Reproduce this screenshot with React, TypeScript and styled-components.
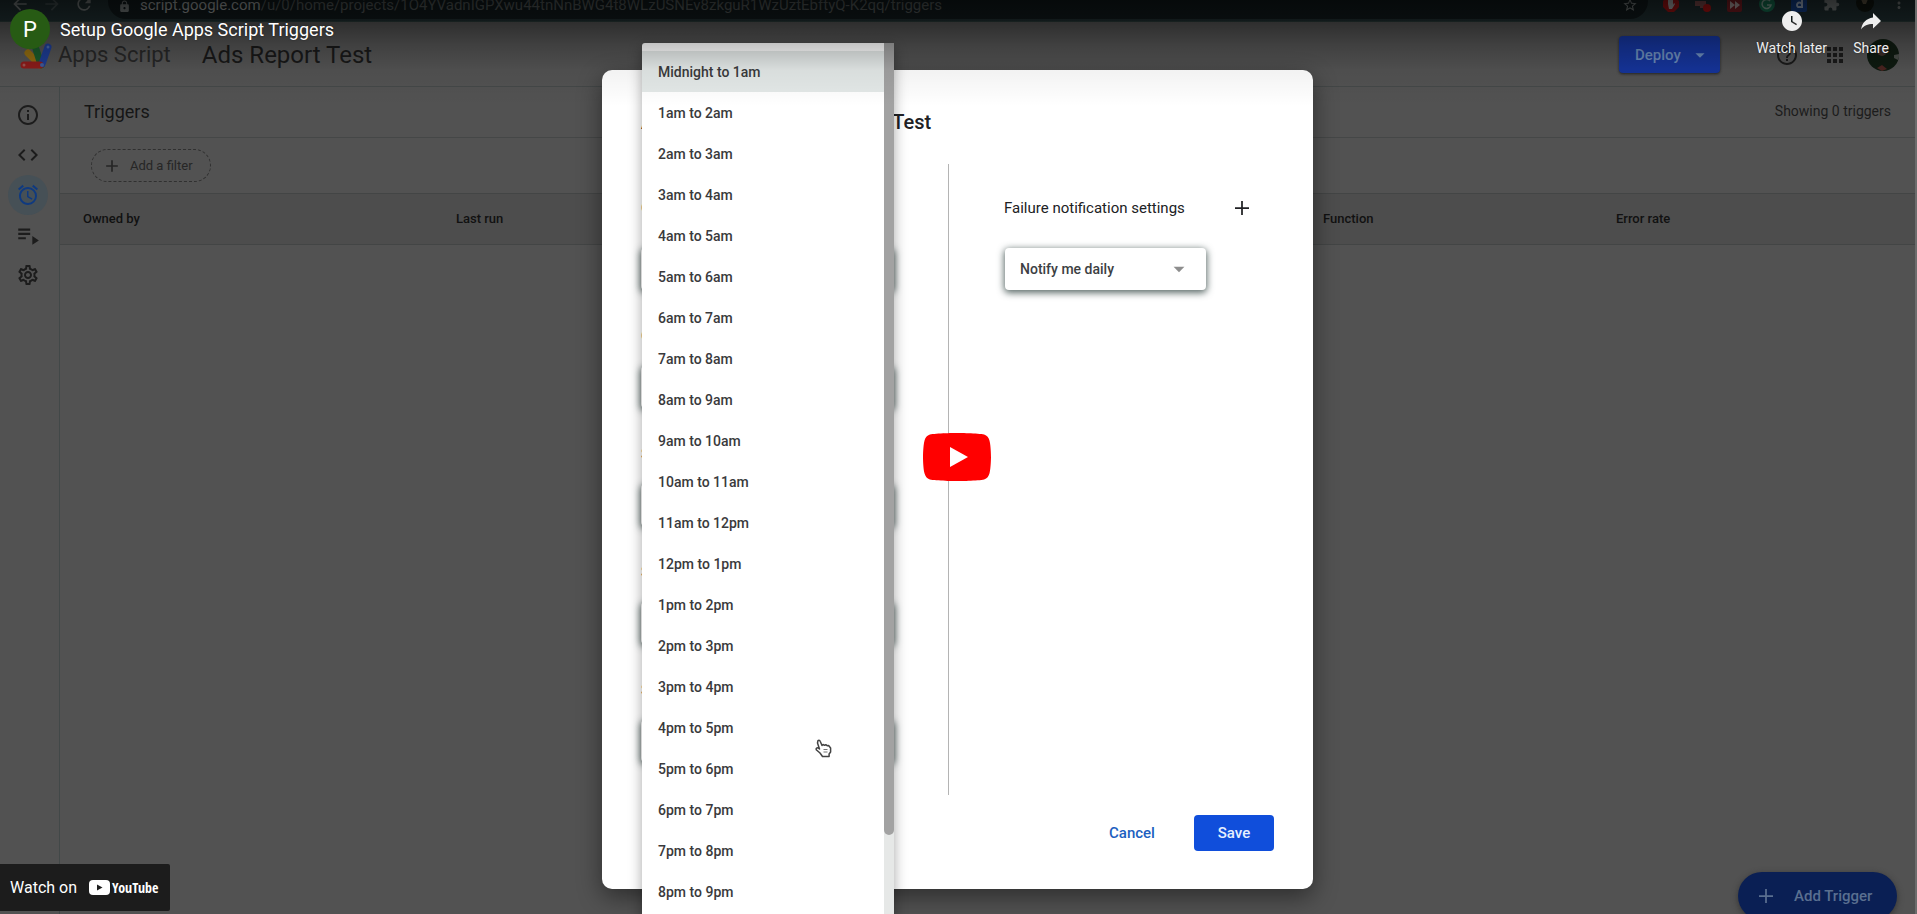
import React from "react";
import styled, { createGlobalStyle } from "styled-components";
import {
  MdAdd,
  MdAlarm,
  MdApps,
  MdArrowBack,
  MdArrowDropDown,
  MdArrowForward,
  MdCode,
  MdExtension,
  MdHelpOutline,
  MdInfoOutline,
  MdLock,
  MdMoreVert,
  MdOutlineSettings,
  MdPlaylistPlay,
  MdRefresh,
  MdStarBorder,
  MdWatchLater,
} from "react-icons/md";

const Global = createGlobalStyle`
  *, *::before, *::after { box-sizing: border-box; }
  body { margin: 0; background: #525252; font-family: Roboto, "Liberation Sans", sans-serif; }
  button, select { font-family: inherit; margin: 0; }
  h1, h2, p, ul { margin: 0; padding: 0; }
`;

const Player = styled.div`
  position: relative;
  height: 100vh;
  overflow: hidden;
  display: flex;
  flex-direction: column;
  background: #525252;
  border-right: 2px solid #6c6c6c;
  color: #161616;
`;

/* Browser chrome */
const BrowserBar = styled.div`
  flex: none;
  height: 22px;
  display: flex;
  align-items: flex-start;
  background: #1f2e30;
  color: #747a7a;
  border-bottom: 1px solid #293938;
`;

const NavIcons = styled.div`
  width: 108px;
  padding-left: 10px;
  display: flex;
  gap: 12px;
  height: 14px;
  align-items: flex-end;
  svg { flex: none; }
  svg:nth-child(2) { opacity: 0.4; }
`;

const AddressBar = styled.div`
  flex: 1;
  height: 19px;
  display: flex;
  align-items: flex-end;
  padding: 0 10px 6px 10px;
  gap: 9px;
  background: #10191b;
  border-radius: 0 0 18px 18px;
  overflow: hidden;
`;

const Url = styled.span`
  flex: 1;
  display: block;
  height: 13px;
  line-height: 10px;
  font-size: 15px;
  white-space: nowrap;
  color: #525858;
  b { font-weight: 400; color: #9a9e9e; }
`;

const Extensions = styled.div`
  display: flex;
  gap: 16px;
  width: 267px;
  padding-left: 15px;
  height: 12px;
  align-items: flex-end;
  svg { flex: none; }
`;

/* Apps Script header */
const Header = styled.header`
  flex: none;
  height: 65px;
  display: flex;
  align-items: center;
  padding: 1px 16px 0 20px;
  border-bottom: 1px solid #444848;
`;

const Brand = styled.span`
  margin-left: 6px;
  font-size: 22px;
  color: #262626;
`;

const Project = styled.h1`
  margin-left: 31px;
  font-size: 24px;
  font-weight: 400;
  color: #181818;
`;

const HeaderTools = styled.div`
  margin-left: auto;
  display: flex;
  align-items: center;
`;

const Deploy = styled.button`
  width: 101px;
  height: 37px;
  border: 0;
  border-radius: 4px;
  background: #15349a;
  color: #6a8ab8;
  font-size: 15px;
  font-weight: 500;
  display: flex;
  align-items: center;
  justify-content: space-between;
  padding: 0 9px 0 16px;
  box-shadow: 0 1px 3px #222;
`;

const IconButton = styled.button<{ $gap: number }>`
  border: 0;
  padding: 0;
  width: 24px;
  height: 24px;
  margin-left: ${(p) => p.$gap}px;
  background: none;
  color: #1a1a1a;
`;

const Photo = styled.svg`
  margin-left: 20px;
`;

/* Workspace */
const Workspace = styled.div`
  flex: 1;
  display: flex;
`;

const Rail = styled.nav`
  width: 60px;
  flex: none;
  border-right: 1px solid #424848;
  display: flex;
  flex-direction: column;
  align-items: center;
  padding: 8px 4px 0 0;
`;

const RailLink = styled.a<{ $active?: boolean }>`
  width: 40px;
  height: 40px;
  border-radius: 50%;
  display: flex;
  align-items: center;
  justify-content: center;
  color: ${(p) => (p.$active ? "#0f3a80" : "#1c1c1c")};
  background: ${(p) => (p.$active ? "#465056" : "none")};
`;

const Main = styled.main`
  flex: 1;
`;

const TitleRow = styled.div`
  height: 51px;
  display: flex;
  align-items: center;
  justify-content: space-between;
  padding: 0 24px 2px 24px;
  border-bottom: 1px solid #454747;
`;

const PageTitle = styled.h2`
  font-size: 18px;
  font-weight: 400;
`;

const Count = styled.p`
  font-size: 14px;
  color: #1c1c1c;
`;

const FilterRow = styled.div`
  height: 55px;
  display: flex;
  align-items: center;
  padding-left: 31px;
`;

const Filter = styled.button`
  width: 120px;
  height: 33px;
  border: 1px dashed #303030;
  border-radius: 17px;
  background: none;
  color: #262626;
  font-size: 13px;
  display: flex;
  align-items: center;
  gap: 8px;
  padding: 0 0 0 10px;
`;

const Table = styled.table`
  width: 100%;
  border-collapse: collapse;
  table-layout: fixed;
  th {
    height: 51px;
    padding: 0 0 2px 23px;
    text-align: left;
    font-size: 13px;
    font-weight: 500;
    color: #111;
    background: #4d4d4d;
    border-top: 1px solid #434545;
    border-bottom: 1px solid #434545;
  }
`;

const Col = styled.col<{ $width: string }>`
  width: ${(p) => p.$width};
`;

const AddTrigger = styled.button`
  position: absolute;
  right: 18px;
  bottom: -6px;
  width: 159px;
  height: 48px;
  border: 0;
  border-radius: 24px;
  background: #0a1f54;
  color: #5a6f90;
  display: flex;
  align-items: center;
  gap: 21px;
  padding: 0 0 0 21px;
  font-size: 15px;
  font-weight: 500;
  white-space: nowrap;
  box-shadow: 0 2px 6px #333;
`;

/* Dialog */
const DialogLayer = styled.div`
  position: absolute;
  inset: 0;
  display: flex;
  justify-content: center;
  align-items: flex-start;
  padding-top: 70px;
`;

const Dialog = styled.section`
  position: relative;
  width: 711px;
  padding: 40px 39px 38px;
  border-radius: 10px;
  background: #fff;
  box-shadow: 0 8px 24px rgba(0, 0, 0, 0.45);
`;

const DialogTitle = styled.h2`
  display: flex;
  gap: 12px;
  font-size: 20px;
  line-height: 24px;
  font-weight: 500;
  color: #202124;
`;

const DialogBody = styled.div`
  display: flex;
  margin-top: 30px;
`;

const FieldColumn = styled.div`
  width: 308px;
  padding: 34px 54px 33px 0;
  border-right: 1px solid #b4b4b4;
`;

const Field = styled.div<{ $gap: number }>`
  display: flex;
  flex-direction: column;
  gap: ${(p) => p.$gap}px;
  & + & { margin-top: 36px; }
`;

const Label = styled.label`
  font-size: 15px;
  line-height: 20px;
  color: #202124;
  white-space: nowrap;
`;

const SelectBox = styled.span`
  display: flex;
  align-items: center;
  height: 42px;
  border-radius: 4px;
  background: #fff;
  box-shadow: 0 2px 7px 1px rgba(40, 60, 58, 0.75);
  padding-right: 14px;
  color: #8d8d8d;
`;

const Select = styled.select`
  flex: 1;
  min-width: 0;
  height: 42px;
  appearance: none;
  border: 0;
  background: none;
  padding: 0 0 0 15px;
  font-size: 14px;
  font-weight: 500;
  color: #3c4043;
`;

const Notify = styled.div`
  flex: 1;
  padding: 34px 0 0 55px;
`;

const NotifyHead = styled.div`
  display: flex;
  align-items: center;
  justify-content: space-between;
  height: 20px;
  width: 245px;
  margin-bottom: 30px;
`;

const NotifyPick = styled.div`
  width: 201px;
  margin-left: 1px;
`;

const PlainButton = styled.button`
  display: flex;
  border: 0;
  padding: 0;
  background: none;
  color: #202124;
`;

const Actions = styled.div`
  display: flex;
  justify-content: flex-end;
  gap: 14px;
  margin-top: 20px;
`;

const Action = styled.button<{ $primary?: boolean }>`
  width: ${(p) => (p.$primary ? 80 : 96)}px;
  height: 36px;
  border: 0;
  border-radius: 4px;
  padding: 0;
  font-size: 15px;
  font-weight: 500;
  color: ${(p) => (p.$primary ? "#e6f0ff" : "#1c5fc0")};
  background: ${(p) => (p.$primary ? "#104edb" : "none")};
`;

/* Open list of hours, lying over the form */
const Menu = styled.div`
  position: absolute;
  left: 40px;
  top: -27px;
  width: 252px;
  display: flex;
  background: #fff;
  border-radius: 3px 3px 0 0;
  box-shadow: 0 5px 14px rgba(0, 0, 0, 0.35);
`;

const Options = styled.ul`
  flex: 1;
  list-style: none;
  padding: 8px 0;
`;

const Option = styled.li<{ $selected: boolean }>`
  height: 41px;
  line-height: 42px;
  padding-left: 16px;
  font-size: 14px;
  font-weight: 500;
  color: #3a3a3c;
  background: ${(p) => (p.$selected ? "#e4e9e8" : "none")};
`;

const Scrollbar = styled.div`
  width: 10px;
  background: #e6e8e7;
`;

const Thumb = styled.div`
  height: 792px;
  border-radius: 0 0 5px 5px;
  background: #a2a2a2;
`;

const Cursor = styled.svg`
  position: absolute;
  left: 173px;
  top: 696px;
`;

/* Video player controls */
const Shade = styled.div`
  position: absolute;
  inset: 0 0 auto 0;
  height: 107px;
  pointer-events: none;
  background: linear-gradient(
    rgba(0, 0, 0, 0.62) 0,
    rgba(0, 0, 0, 0.44) 22px,
    rgba(0, 0, 0, 0.22) 45px,
    rgba(0, 0, 0, 0.05) 70px,
    rgba(0, 0, 0, 0) 106px
  );
`;

const VideoBar = styled.div`
  position: absolute;
  inset: 0 0 auto 0;
  display: flex;
  align-items: flex-start;
  padding: 9px 20px 0 10px;
  color: #eee;
`;

const Channel = styled.a`
  width: 40px;
  height: 40px;
  border-radius: 50%;
  background: #275b14;
  color: #fff;
  font-size: 22px;
  line-height: 42px;
  text-align: center;
  text-decoration: none;
`;

const VideoTitle = styled.a`
  margin-left: 10px;
  font-size: 18px;
  line-height: 42px;
  color: #fff;
  text-decoration: none;
  text-shadow: 0 0 2px rgba(0, 0, 0, 0.5);
`;

const VideoActions = styled.div`
  margin-left: auto;
  display: flex;
  gap: 20px;
`;

const VideoAction = styled.button`
  border: 0;
  padding: 0;
  background: none;
  color: #eee;
  display: flex;
  flex-direction: column;
  align-items: center;
  gap: 6px;
  min-width: 48px;
  font-size: 14px;
  line-height: 18px;
  text-shadow: 0 0 2px rgba(0, 0, 0, 0.5);
`;

const Play = styled.button`
  position: absolute;
  left: 50%;
  top: 50%;
  width: 68px;
  height: 48px;
  margin: -24px 0 0 -35px;
  border: 0;
  padding: 0;
  background: none;
  svg { display: block; }
`;

const WatchOn = styled.a`
  position: absolute;
  left: 0;
  bottom: 3px;
  width: 170px;
  height: 47px;
  display: flex;
  align-items: center;
  gap: 12px;
  padding-left: 10px;
  border-radius: 0 2px 2px 0;
  background: #1c1c1c;
  color: #fff;
  font-size: 16px;
  text-decoration: none;
`;

const YouTube = styled.span`
  display: flex;
  align-items: center;
  gap: 2px;
  font-family: "Open Sans Condensed", "Liberation Sans Narrow", Roboto, sans-serif;
  font-size: 14px;
  font-weight: 700;
`;

const hours = [
  "Midnight to 1am", "1am to 2am", "2am to 3am", "3am to 4am", "4am to 5am",
  "5am to 6am", "6am to 7am", "7am to 8am", "8am to 9am", "9am to 10am",
  "10am to 11am", "11am to 12pm", "12pm to 1pm", "1pm to 2pm", "2pm to 3pm",
  "3pm to 4pm", "4pm to 5pm", "5pm to 6pm", "6pm to 7pm", "7pm to 8pm",
  "8pm to 9pm",
];

const fields = [
  { id: "fn", label: "Choose which function to run" },
  { id: "deployment", label: "Choose which deployment should run" },
  { id: "source", label: "Select event source" },
  { id: "kind", label: "Select type of time based trigger" },
  { id: "time", label: "Select time of day" },
];

function AppsScriptLogo() {
  return (
    <svg width="32" height="30" viewBox="0 0 32 30" aria-hidden="true">
      <g strokeLinecap="round" strokeWidth="7">
        <path d="M20 25 8 13" stroke="#8f6a10" />
        <path d="M21 25 16 9" stroke="#1a5a2a" />
        <path d="M22 24 28 7" stroke="#1d3c92" />
        <path d="M4 25H20" stroke="#8c1c1a" />
      </g>
      <circle cx="22" cy="25" r="2" fill="#3c5c9c" />
      <circle cx="28" cy="7" r="1.5" fill="#4a64a4" />
      <circle cx="4" cy="25" r="1.5" fill="#9a5450" />
    </svg>
  );
}

function ExtensionIcons() {
  return (
    <Extensions>
      <svg width="16" height="16" viewBox="0 0 16 16">
        <path d="M5 0h6l5 5v6l-5 5H5l-5-5V5z" fill="#a01212" />
        <path d="M5 8V4h1v3V2h1v5V2h2v5V3h1v6l1-2 1 1-3 5H6z" fill="#aaa" />
      </svg>
      <svg width="16" height="16" viewBox="0 0 16 16">
        <path d="M0 5h11v7H5v-2H0z" fill="#7d4a4a" />
        <circle cx="12" cy="12" r="4" fill="#b01212" />
      </svg>
      <svg width="16" height="16" viewBox="0 0 16 16">
        <rect width="15" height="16" rx="2" fill="#7b1c22" />
        <path d="m3 5 5 4-5 4zm5 0 5 4-5 4z" fill="#b5a5a5" />
      </svg>
      <svg width="16" height="16" viewBox="0 0 16 16">
        <circle cx="8" cy="8" r="8" fill="#157050" />
        <path d="M11 5a4.500 4.500 0 1 0 1 4H8" fill="none" stroke="#8aa89c" strokeWidth="1.500" />
      </svg>
      <svg width="16" height="16" viewBox="0 0 16 16">
        <rect width="16" height="16" rx="2" fill="#123e88" />
        <path d="M11 2v9H7a2.500 2.500 0 1 1 4-2" fill="none" stroke="#a0b0c8" strokeWidth="2" />
      </svg>
      <MdExtension size={17} />
      <svg width="18" height="18" viewBox="0 0 18 18">
        <circle cx="9" cy="9" r="9" fill="#10150f" />
        <path d="M5 5h7l-2 5H7z" fill="#5c5240" />
      </svg>
      <MdMoreVert size={18} />
    </Extensions>
  );
}

function PlusIcon({ size }: { size: number }) {
  return (
    <svg width={size} height={size} viewBox="0 0 16 16" aria-hidden="true">
      <path d="M8 0v16M0 8h16" stroke="currentColor" strokeWidth="2" />
    </svg>
  );
}

export default function App() {
  return (
    <Player>
      <Global />
      <BrowserBar>
        <NavIcons>
          <MdArrowBack size={20} />
          <MdArrowForward size={20} />
          <MdRefresh size={20} />
        </NavIcons>
        <AddressBar>
          <MdLock size={13} />
          <Url>
            <b>script.google.com</b>
            /u/0/home/projects/1O4YVadnIGPXwu44tnNnBWG4t8WLzUSNEv8zkguR1WzUztEbftyQ-K2qq/triggers
          </Url>
          <MdStarBorder size={16} />
        </AddressBar>
        <ExtensionIcons />
      </BrowserBar>

      <Header>
        <AppsScriptLogo />
        <Brand>Apps Script</Brand>
        <Project>Ads Report Test</Project>
        <HeaderTools>
          <Deploy>
            Deploy
            <MdArrowDropDown size={22} />
          </Deploy>
          <IconButton $gap={55} aria-label="Help"><MdHelpOutline size={24} /></IconButton>
          <IconButton $gap={24} aria-label="Google apps"><MdApps size={24} /></IconButton>
          <Photo width="32" height="32" viewBox="0 0 32 32" aria-hidden="true">
            <circle cx="16" cy="16" r="16" fill="#0e1a10" />
            <circle cx="15" cy="12" r="5" fill="#3d2e28" />
            <path d="M27 16l5-1c0 3 0 4-1 6l-4-2z" fill="#474b46" />
            <path d="M10 29l5-3 5 4-5 2z" fill="#4a2420" />
          </Photo>
        </HeaderTools>
      </Header>

      <Workspace>
        <Rail>
          <RailLink href="#overview" aria-label="Overview"><MdInfoOutline size={24} /></RailLink>
          <RailLink href="#editor" aria-label="Editor"><MdCode size={24} /></RailLink>
          <RailLink href="#triggers" aria-label="Triggers" $active><MdAlarm size={24} /></RailLink>
          <RailLink href="#executions" aria-label="Executions"><MdPlaylistPlay size={26} /></RailLink>
          <RailLink href="#settings" aria-label="Settings"><MdOutlineSettings size={24} /></RailLink>
        </Rail>
        <Main>
          <TitleRow>
            <PageTitle>Triggers</PageTitle>
            <Count>Showing 0 triggers</Count>
          </TitleRow>
          <FilterRow>
            <Filter><MdAdd size={20} />Add a filter</Filter>
          </FilterRow>
          <Table>
            <colgroup>
              <Col $width="373px" />
              <Col $width="auto" />
              <Col $width="293px" />
              <Col $width="322px" />
            </colgroup>
            <thead>
              <tr>
                <th>Owned by</th>
                <th>Last run</th>
                <th>Function</th>
                <th>Error rate</th>
              </tr>
            </thead>
          </Table>
        </Main>
      </Workspace>
      <AddTrigger><PlusIcon size={14} />Add Trigger</AddTrigger>

      <DialogLayer>
        <Dialog role="dialog" aria-labelledby="dialog-title">
          <DialogTitle id="dialog-title">
            <span>Add Trigger for</span>
            <span>Ads Report Test</span>
          </DialogTitle>
          <DialogBody>
            <FieldColumn>
              {fields.map((f, i) => (
                <Field key={f.id} $gap={i === 0 ? 30 : 20}>
                  <Label htmlFor={f.id}>{f.label}</Label>
                  <SelectBox>
                    <Select id={f.id} />
                  </SelectBox>
                </Field>
              ))}
            </FieldColumn>
            <Notify>
              <NotifyHead>
                <Label htmlFor="notify">Failure notification settings</Label>
                <PlainButton aria-label="Add notification"><PlusIcon size={14} /></PlainButton>
              </NotifyHead>
              <NotifyPick>
                <SelectBox>
                  <Select id="notify"><option>Notify me daily</option></Select>
                  <MdArrowDropDown size={26} />
                </SelectBox>
              </NotifyPick>
            </Notify>
          </DialogBody>
          <Actions>
            <Action>Cancel</Action>
            <Action $primary>Save</Action>
          </Actions>

          <Menu>
            <Options role="listbox" aria-label="Time of day">
              {hours.map((h, i) => (
                <Option key={h} role="option" aria-selected={i === 0} $selected={i === 0}>{h}</Option>
              ))}
            </Options>
            <Scrollbar><Thumb /></Scrollbar>
            <Cursor width="17" height="19" viewBox="0 0 17 19" aria-hidden="true">
              <path
                d="M3 1.500c1-.8 2 0 2.300 1L7 6.500l1-1 1.500.8 1.300-.6 1.300 1 1.500-.2 2 2.500v4l-1.500 2v2.500H7.500L5 14l-3.500-3c-1-1.500.5-2.500 1.500-2l1.500 1-2-6z"
                fill="#fff" stroke="#444" strokeWidth="1.500" strokeLinejoin="round"
              />
              <path d="M8.500 10.500h4M8.500 13h4" stroke="#777" />
            </Cursor>
          </Menu>
        </Dialog>
      </DialogLayer>

      <Shade />
      <VideoBar>
        <Channel href="#channel">P</Channel>
        <VideoTitle href="#video">Setup Google Apps Script Triggers</VideoTitle>
        <VideoActions>
          <VideoAction><MdWatchLater size={24} />Watch later</VideoAction>
          <VideoAction>
            <svg width="24" height="24" viewBox="0 0 24 24">
              <path d="M14 4l8 8-8 7.500v-4.500C8.500 15 5 16.500 2 20.500 3 14 7 9.500 14 8.500z" fill="currentColor" />
            </svg>
            Share
          </VideoAction>
        </VideoActions>
      </VideoBar>
      <Play aria-label="Play">
        <svg width="68" height="48" viewBox="0 0 68 48">
          <path d="M66.520 7.740c-.78-2.930-2.490-5.410-5.420-6.190C55.790.13 34 0 34 0S12.210.13 6.900 1.550c-2.930.78-4.630 3.260-5.420 6.190C.06 13.050 0 24 0 24s.06 10.950 1.480 16.260c.78 2.930 2.490 5.410 5.420 6.190C12.210 47.870 34 48 34 48s21.790-.13 27.100-1.550c2.930-.78 4.640-3.260 5.420-6.190C67.940 34.950 68 24 68 24s-.06-10.950-1.480-16.260z" fill="#f00" />
          <path d="M45 24 27 14v20" fill="#fff" />
        </svg>
      </Play>
      <WatchOn href="#youtube">
        Watch on
        <YouTube>
          <svg width="21" height="15" viewBox="0 0 21 15" aria-hidden="true">
            <rect width="21" height="15" rx="4" fill="#fff" />
            <path d="M8 4.500v6l5.500-3z" fill="#1c1c1c" />
          </svg>
          YouTube
        </YouTube>
      </WatchOn>
    </Player>
  );
}
